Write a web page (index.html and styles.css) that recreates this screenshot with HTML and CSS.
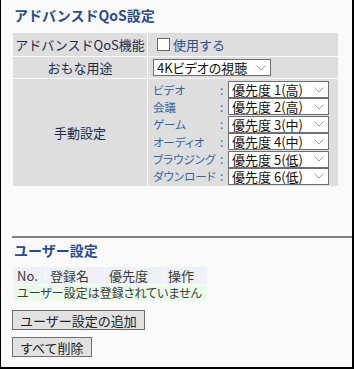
FILE: index.html
```html
<!DOCTYPE html>
<html lang="ja">
<head>
<meta charset="utf-8">
<title>アドバンスドQoS設定</title>
<link rel="stylesheet" href="styles.css">
</head>
<body>
<div class="page">
  <h1 class="title">アドバンスドQoS設定</h1>
  <table class="qos">
    <tr class="r1">
      <th class="lab">アドバンスドQoS機能</th>
      <td class="val"><label class="chk"><span class="box"></span><span class="chk-text">使用する</span></label></td>
    </tr>
    <tr class="r2">
      <th class="lab">おもな用途</th>
      <td class="val"><div class="sel sel-wide"><span>4Kビデオの視聴</span><svg class="chev" width="10" height="6" viewBox="0 0 10 6"><path d="M0.5 0.5 L5 5 L9.5 0.5" fill="none" stroke="#a0a0a0" stroke-width="1"/></svg></div></td>
    </tr>
    <tr class="r3">
      <th class="lab">手動設定</th>
      <td class="val">
        <div class="manual">
          <span class="mlab">ビデオ</span><span class="colon">:</span><div class="sel sel-pri"><span>優先度 1(高)</span><svg class="chev" width="10" height="6" viewBox="0 0 10 6"><path d="M0.5 0.5 L5 5 L9.5 0.5" fill="none" stroke="#a0a0a0" stroke-width="1"/></svg></div>
          <span class="mlab">会議</span><span class="colon">:</span><div class="sel sel-pri"><span>優先度 2(高)</span><svg class="chev" width="10" height="6" viewBox="0 0 10 6"><path d="M0.5 0.5 L5 5 L9.5 0.5" fill="none" stroke="#a0a0a0" stroke-width="1"/></svg></div>
          <span class="mlab">ゲーム</span><span class="colon">:</span><div class="sel sel-pri"><span>優先度 3(中)</span><svg class="chev" width="10" height="6" viewBox="0 0 10 6"><path d="M0.5 0.5 L5 5 L9.5 0.5" fill="none" stroke="#a0a0a0" stroke-width="1"/></svg></div>
          <span class="mlab">オーディオ</span><span class="colon">:</span><div class="sel sel-pri"><span>優先度 4(中)</span><svg class="chev" width="10" height="6" viewBox="0 0 10 6"><path d="M0.5 0.5 L5 5 L9.5 0.5" fill="none" stroke="#a0a0a0" stroke-width="1"/></svg></div>
          <span class="mlab">ブラウジング</span><span class="colon">:</span><div class="sel sel-pri"><span>優先度 5(低)</span><svg class="chev" width="10" height="6" viewBox="0 0 10 6"><path d="M0.5 0.5 L5 5 L9.5 0.5" fill="none" stroke="#a0a0a0" stroke-width="1"/></svg></div>
          <span class="mlab">ダウンロード</span><span class="colon">:</span><div class="sel sel-pri"><span>優先度 6(低)</span><svg class="chev" width="10" height="6" viewBox="0 0 10 6"><path d="M0.5 0.5 L5 5 L9.5 0.5" fill="none" stroke="#a0a0a0" stroke-width="1"/></svg></div>
        </div>
      </td>
    </tr>
  </table>
  <div class="rule"></div>
  <h2 class="title sub">ユーザー設定</h2>
  <table class="users">
    <tr class="uhead">
      <th class="c-no">No.</th>
      <th class="c-name">登録名</th>
      <th class="c-pri">優先度</th>
      <th class="c-op">操作</th>
    </tr>
    <tr class="uempty">
      <td colspan="4">ユーザー設定は登録されていません</td>
    </tr>
  </table>
  <div class="btns">
    <button class="btn">ユーザー設定の追加</button>
    <button class="btn">すべて削除</button>
  </div>
</div>
</body>
</html>
```

FILE: styles.css
```css
html, body {
  margin: 0;
  padding: 0;
  background: #fafafa;
}
body {
  font-family: "Noto Sans CJK JP", "Noto Sans", "Liberation Sans", sans-serif;
  font-size: 13px;
  color: #1c2b4a;
}
.page {
  width: 354px;
  height: 369px;
  box-sizing: border-box;
  border-left: 1px solid #000;
  border-right: 2px solid #000;
  border-bottom: 2px solid #000;
  background: #fafafa;
  overflow: hidden;
}
.title {
  margin: 0;
  padding: 6px 0 0 13px;
  font-size: 14px;
  line-height: 18px;
  font-weight: bold;
  color: #2b4c8c;
}
.qos {
  margin: 8px 0 0 11px;
  border-collapse: separate;
  border-spacing: 1px;
  width: 327px;
  background: #fafafa;
}
.qos th, .qos td {
  background: #dedede;
  padding: 0;
  line-height: 16px;
}
.lab {
  width: 134px;
  font-weight: normal;
  text-align: center;
  color: #1c2b4a;
  font-size: 13px;
}
.val {
  padding-left: 5px !important;
}
.r1 th, .r1 td { height: 23px; }
.r2 th, .r2 td { height: 21px; }
.r3 th, .r3 td { height: 107px; }
.chk {
  display: flex;
  align-items: center;
  gap: 3px;
  padding-left: 4px;
}
.box {
  width: 11px;
  height: 11px;
  border: 1px solid #6a6a6a;
  background: #fff;
}
.chk-text {
  color: #2c4f86;
  line-height: 16px;
}
.sel {
  display: flex;
  align-items: center;
  justify-content: space-between;
  gap: 2px;
  box-sizing: border-box;
  height: 17px;
  border: 1px solid #6f6f6f;
  background: #fff;
  color: #111;
  font-size: 13px;
  line-height: 15px;
  padding: 0 4px 0 3px;
  white-space: nowrap;
  overflow: hidden;
}
.sel-wide {
  width: 118px;
  font-feature-settings: "palt";
}
.sel-pri {
  width: 101px;
}
.chev {
  flex: none;
}
.manual {
  display: grid;
  grid-template-columns: 67px 8px 101px;
  grid-auto-rows: 17.4px;
  align-items: center;
  padding-top: 1px;
}
.mlab {
  color: #3465a4;
  font-size: 11.5px;
  line-height: 14px;
  white-space: nowrap;
  font-feature-settings: "palt";
}
.colon {
  color: #3465a4;
  font-size: 12px;
  line-height: 14px;
  text-align: left;
}
.rule {
  margin: 49px 0 0 11px;
  height: 0;
  border-top: 2px solid #808080;
}
.sub {
  padding-top: 3px;
}
.users {
  margin: 7px 0 0 11px;
  border-collapse: separate;
  border-spacing: 1px;
  background: #fafafa;
  table-layout: fixed;
  width: 196px;
}
.users th, .users td {
  padding: 0 4px;
  font-weight: normal;
  color: #3a3a3a;
  font-size: 13px;
  line-height: 16px;
  text-align: left;
  white-space: nowrap;
}
.uhead th {
  background: #eef1f7;
  height: 17px;
}
.c-no { width: 24px; }
.c-name { width: 50px; }
.c-pri { width: 50px; }
.c-op { width: 35px; }
.uempty td {
  background: #eafbea;
  height: 16px;
  line-height: 16px;
  font-size: 12px;
  font-feature-settings: "palt";
  color: #3a3a3a;
}
.btns {
  display: flex;
  flex-direction: column;
  align-items: flex-start;
  gap: 7px;
  margin: 8px 0 0 11px;
}
.btn {
  font-family: inherit;
  font-size: 13px;
  line-height: 17px;
  height: 20px;
  padding: 0 7px;
  margin: 0;
  border: 1px solid #6f6f6f;
  border-radius: 0;
  background: #e1e1e1;
  color: #222;
}
```
